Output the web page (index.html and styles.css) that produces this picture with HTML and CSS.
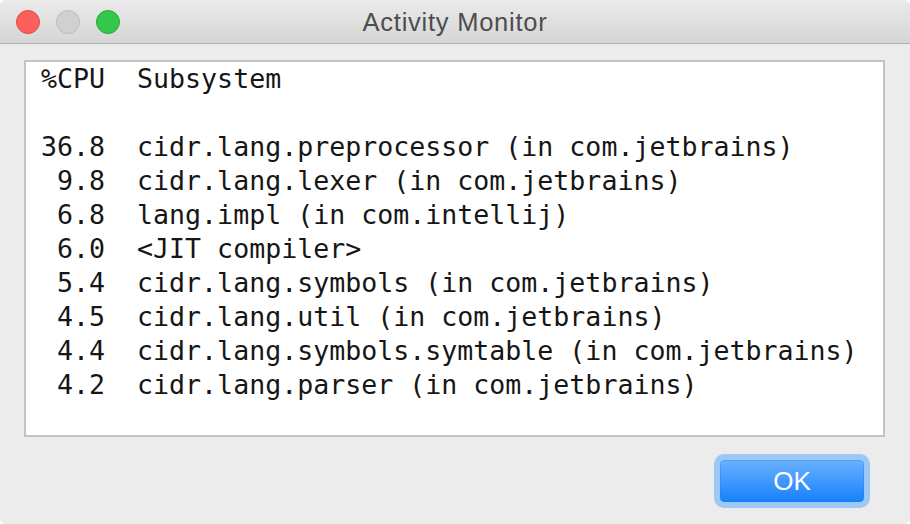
FILE: index.html
```html
<!DOCTYPE html>
<html>
<head>
<meta charset="utf-8">
<link rel="stylesheet" href="styles.css">
</head>
<body>
<div class="window">
  <div class="titlebar">
    <div class="lights">
      <span class="light red"></span>
      <span class="light gray"></span>
      <span class="light green"></span>
    </div>
    <div class="title">Activity Monitor</div>
  </div>
  <div class="body">
    <pre class="panel">%CPU  Subsystem

36.8  cidr.lang.preprocessor (in com.jetbrains)
 9.8  cidr.lang.lexer (in com.jetbrains)
 6.8  lang.impl (in com.intellij)
 6.0  &lt;JIT compiler&gt;
 5.4  cidr.lang.symbols (in com.jetbrains)
 4.5  cidr.lang.util (in com.jetbrains)
 4.4  cidr.lang.symbols.symtable (in com.jetbrains)
 4.2  cidr.lang.parser (in com.jetbrains)</pre>
    <div class="actions">
      <button class="ok">OK</button>
    </div>
  </div>
</div>
</body>
</html>
```
FILE: styles.css
```css
html, body {
  margin: 0;
  padding: 0;
  background: #ffffff;
}
.window {
  width: 910px;
  height: 524px;
  border-radius: 6px;
  overflow: hidden;
  background: #ececec;
  display: flex;
  flex-direction: column;
}
.titlebar {
  height: 43px;
  flex: none;
  position: relative;
  background: linear-gradient(#ebebeb, #d5d5d5);
  border-bottom: 1px solid #b1b1b1;
  display: flex;
  align-items: center;
  justify-content: center;
}
.lights {
  position: absolute;
  left: 16px;
  top: 10px;
  display: flex;
  gap: 16px;
}
.light {
  width: 22px;
  height: 22px;
  border-radius: 50%;
  box-sizing: content-box;
  border: 1px solid;
}
.red { background: #fc605c; border-color: #de4b47; }
.gray { background: #d0d0d0; border-color: #bcbcbc; }
.green { background: #34c84a; border-color: #27a837; }
.title {
  font-family: "Liberation Sans", Arial, sans-serif;
  font-size: 25.5px;
  letter-spacing: 0.75px;
  color: #4d4d4d;
  margin-top: 1px;
}
.body {
  flex: 1;
  display: flex;
  flex-direction: column;
  padding: 16px 24px 0 24px;
}
.panel {
  margin: 0;
  height: 377px;
  box-sizing: border-box;
  width: 861px;
  background: #ffffff;
  border: 2px solid #c3c3c3;
  padding: 0 0 0 15px;
  font-family: "DejaVu Sans Mono", monospace;
  font-size: 26.6px;
  line-height: 34px;
  color: #161616;
}
.actions {
  display: flex;
  justify-content: flex-end;
  padding: 17px 16px 0 0;
}
.ok {
  width: 156px;
  height: 54px;
  padding: 0;
  border: 6px solid #9dc7f5;
  border-radius: 10px;
  background: linear-gradient(#6ab1ff, #1781fb);
  background-clip: padding-box;
  color: #ffffff;
  font-family: "Liberation Sans", Arial, sans-serif;
  font-size: 26px;
  box-shadow: inset 0 0 0 1px rgba(40, 120, 230, 0.35);
}
```
